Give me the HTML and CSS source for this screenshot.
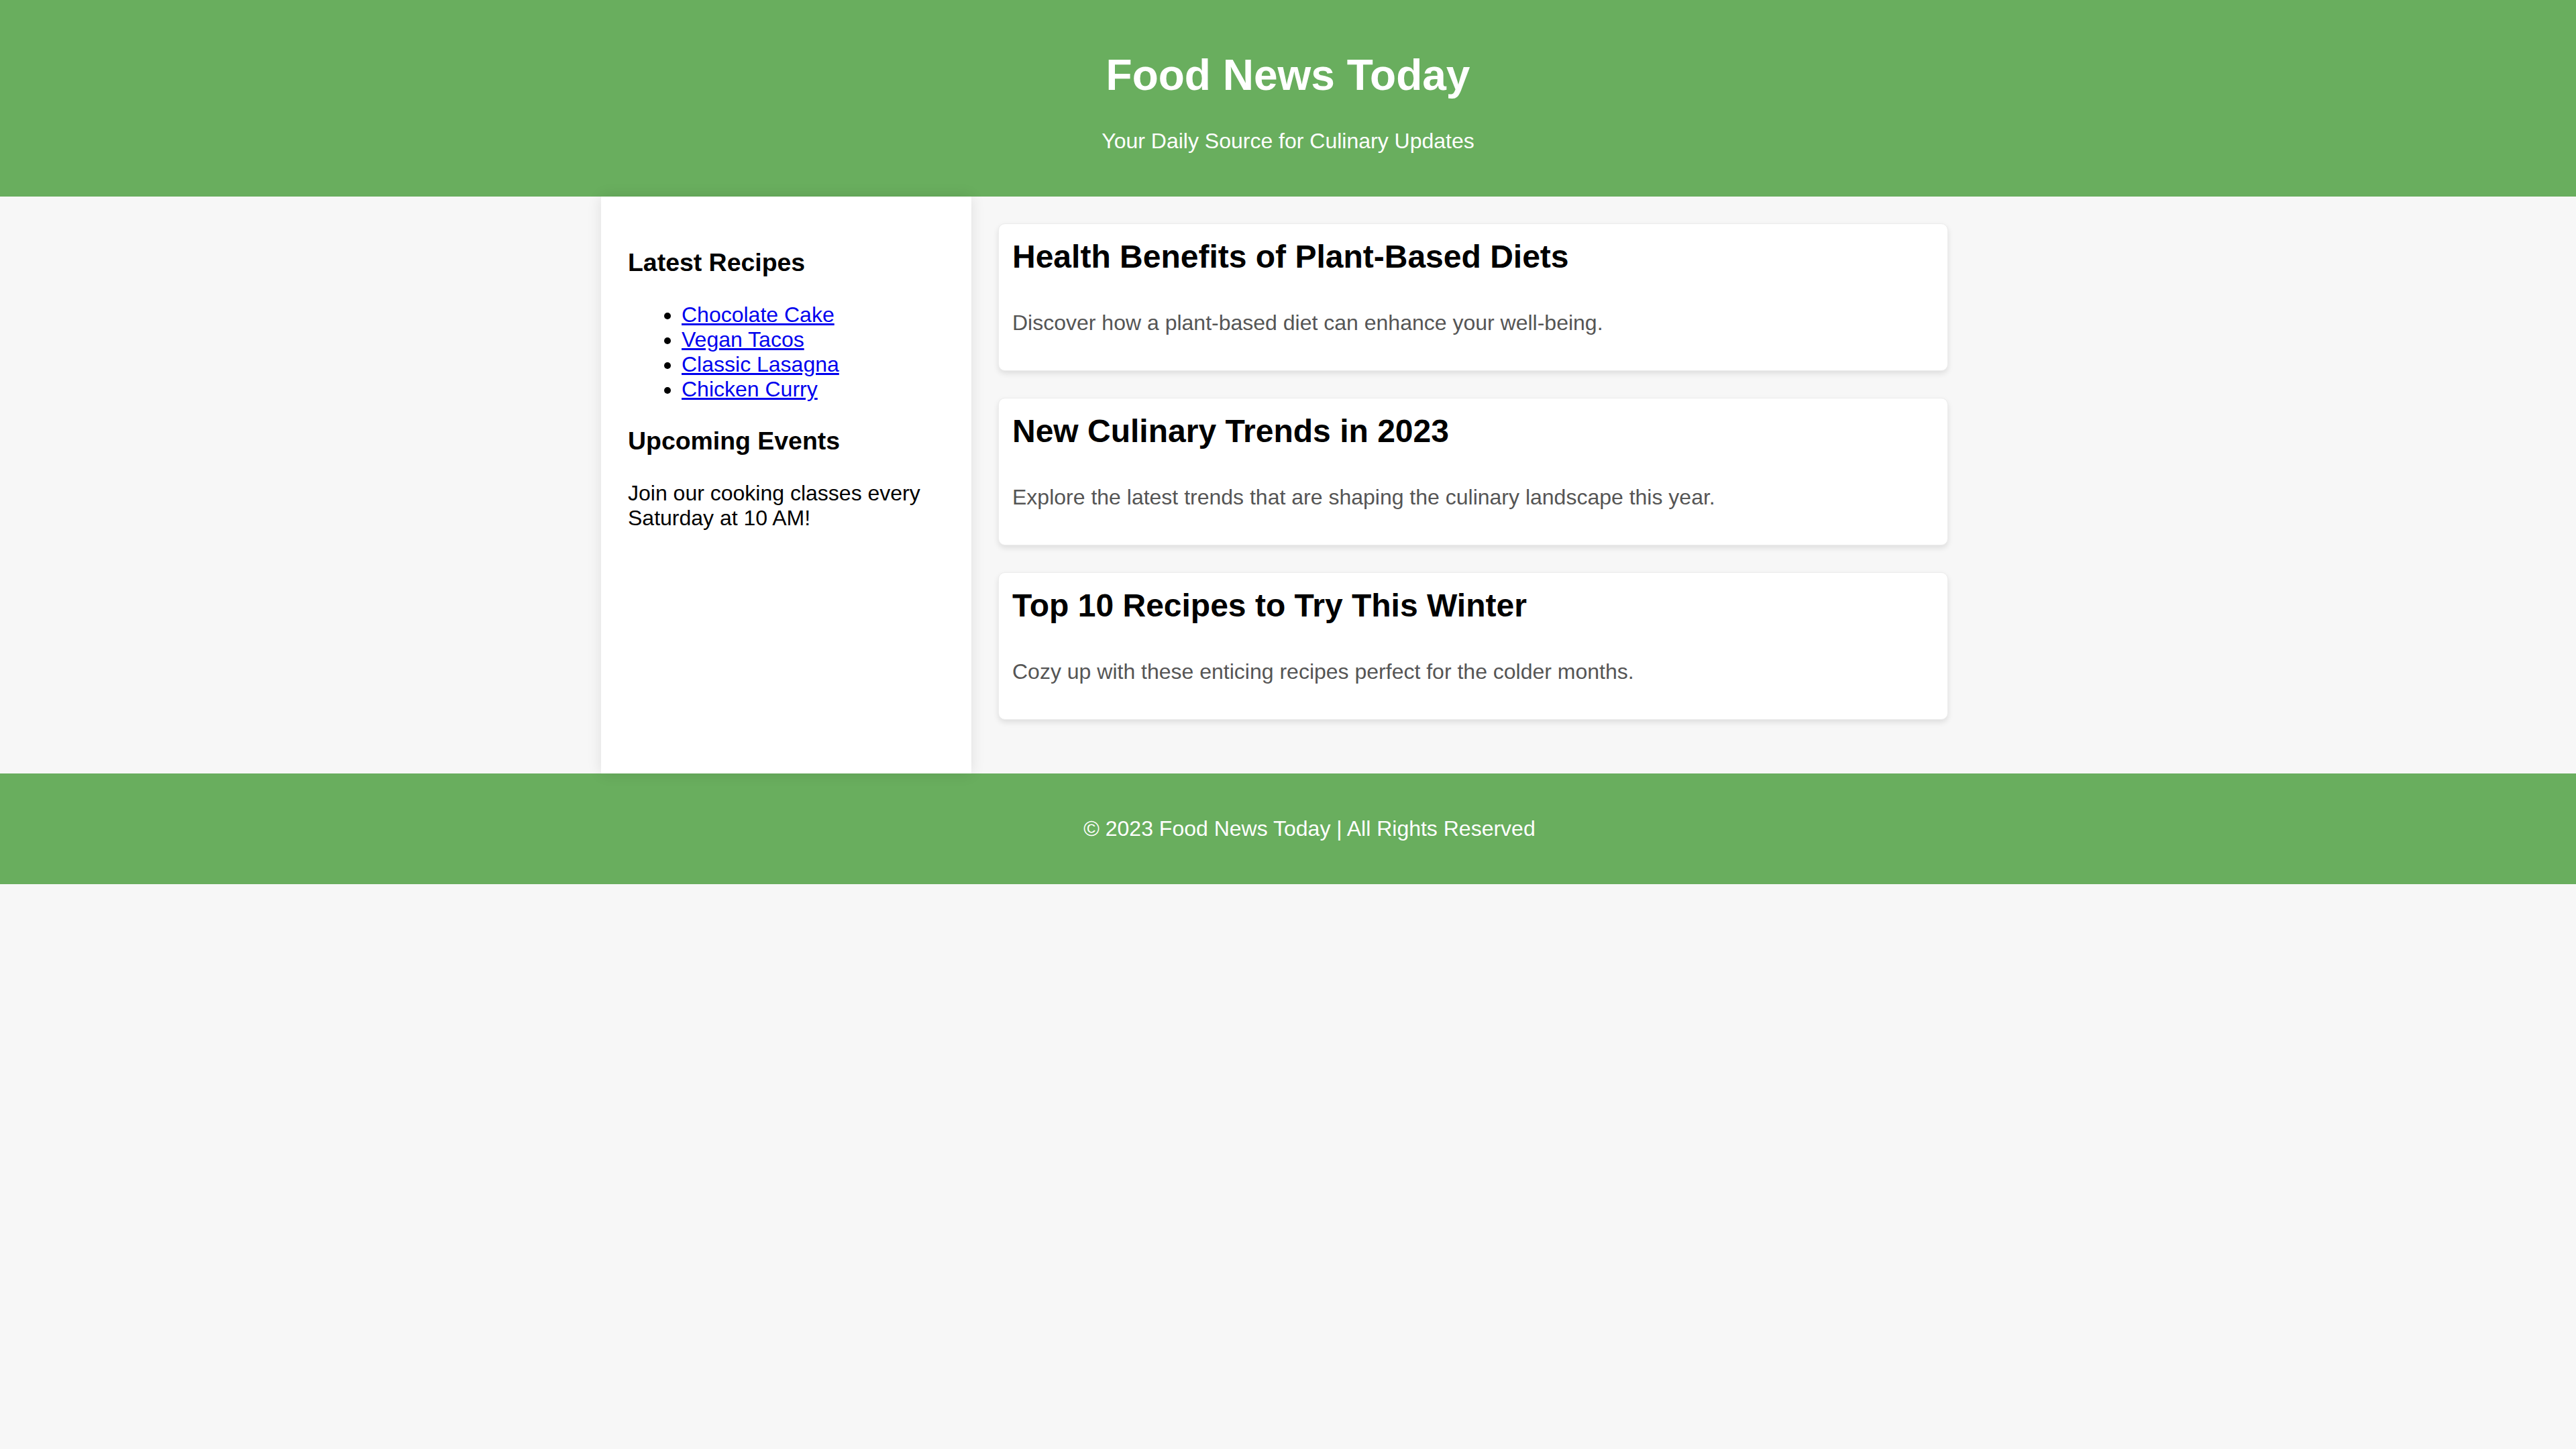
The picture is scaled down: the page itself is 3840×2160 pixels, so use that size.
FILE: index.html
```html
<!DOCTYPE html>
<html lang="en">
<head>
<meta charset="UTF-8">
<title>Food News Today</title>
<link rel="stylesheet" href="styles.css">
</head>
<body>
<header class="site-header">
  <h1 class="site-title">Food News Today</h1>
  <p class="site-tagline">Your Daily Source for Culinary Updates</p>
</header>
<div class="layout">
  <aside class="sidebar">
    <h3 class="side-heading">Latest Recipes</h3>
    <ul class="recipe-list">
      <li><a href="#">Chocolate Cake</a></li>
      <li><a href="#">Vegan Tacos</a></li>
      <li><a href="#">Classic Lasagna</a></li>
      <li><a href="#">Chicken Curry</a></li>
    </ul>
    <h3 class="side-heading">Upcoming Events</h3>
    <p class="side-text">Join our cooking classes every Saturday at 10 AM!</p>
  </aside>
  <main class="content">
    <article class="card">
      <h2 class="card-title">Health Benefits of Plant-Based Diets</h2>
      <p class="card-text">Discover how a plant-based diet can enhance your well-being.</p>
    </article>
    <article class="card">
      <h2 class="card-title">New Culinary Trends in 2023</h2>
      <p class="card-text">Explore the latest trends that are shaping the culinary landscape this year.</p>
    </article>
    <article class="card">
      <h2 class="card-title">Top 10 Recipes to Try This Winter</h2>
      <p class="card-text">Cozy up with these enticing recipes perfect for the colder months.</p>
    </article>
  </main>
</div>
<footer class="site-footer">
  <p class="footer-text">&copy; 2023 Food News Today | All Rights Reserved</p>
</footer>
</body>
</html>
```
FILE: styles.css
```css
html {
  overflow-x: hidden;
}
body {
  margin: 0;
  font-family: "Liberation Sans", Arial, Helvetica, sans-serif;
  font-size: 32px;
  background: #f7f7f7;
  color: #000;
}
.site-header {
  background: #69ae5e;
  color: #fff;
  text-align: center;
  padding: 32px;
}
.site-title {
  font-size: 64px;
  font-weight: bold;
  margin: 43px 0;
}
.site-tagline {
  font-size: 32px;
  margin: 32px 0;
}
.layout {
  width: 2048px;
  margin: 0 auto;
  display: flex;
  align-items: stretch;
}
.sidebar {
  position: relative;
  width: 472px;
  flex: none;
  padding: 40px;
  background: #fff;
  box-shadow: 0 0 20px rgba(0, 0, 0, 0.1);
}
.side-heading {
  font-size: 37.44px;
  font-weight: bold;
  margin: 37.44px 0;
}
.recipe-list {
  margin: 32px 0;
  padding-left: 80px;
}
.recipe-list a {
  color: #0000ee;
  text-decoration: underline;
}
.side-text {
  margin: 32px 0;
}
.content {
  flex: 1;
  padding: 40px;
}
.card {
  background: #fff;
  border-radius: 10px;
  padding: 21px 20px 20px;
  margin-bottom: 40px;
  box-shadow: 0 4px 8px rgba(0, 0, 0, 0.1);
  border: 1px solid #ececec;
}
.card-title {
  font-size: 48px;
  font-weight: bold;
  margin: 0;
}
.card-text {
  color: #555;
  margin: 53px 0 32px;
}
.site-footer {
  width: 100%;
  background: #69ae5e;
  color: #fff;
  text-align: center;
  padding: 32px;
}
.footer-text {
  margin: 32px 0;
}
```
